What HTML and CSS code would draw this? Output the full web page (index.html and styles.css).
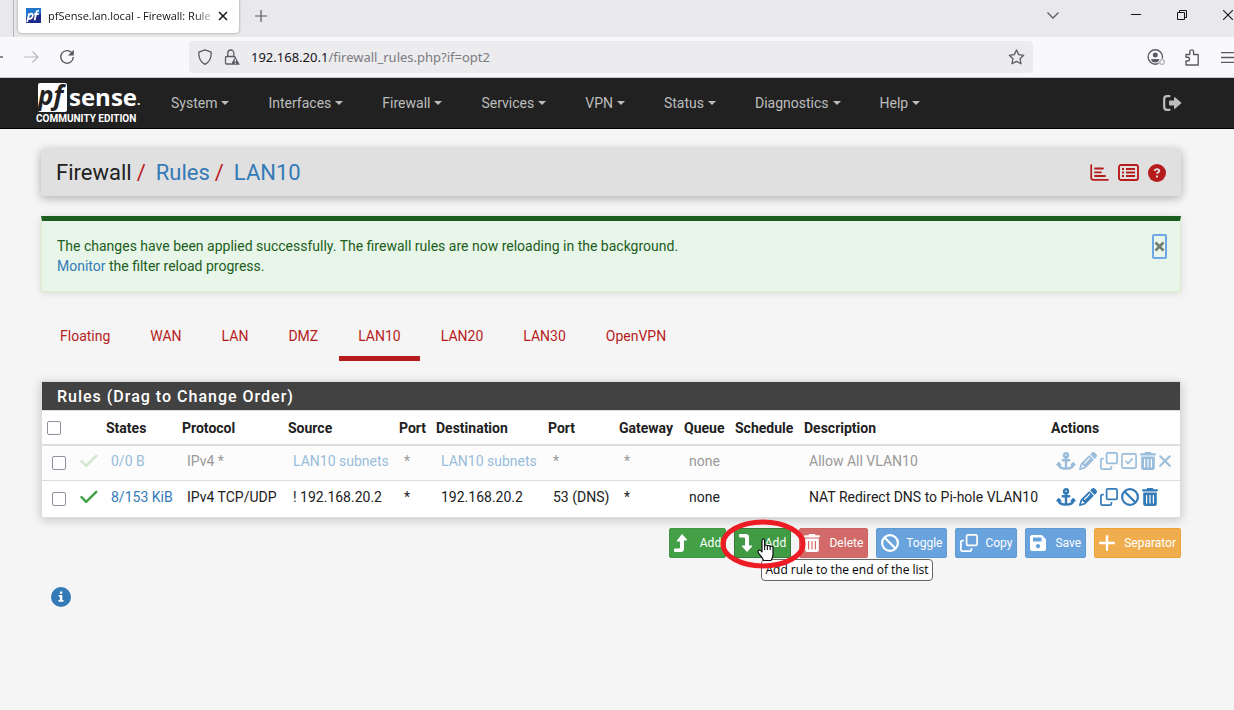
FILE: index.html
```html
<!DOCTYPE html>
<html lang="en">
<head>
<meta charset="utf-8">
<title>pfSense.lan.local - Firewall: Rules: LAN10</title>
<link rel="stylesheet" href="styles.css">
</head>
<body>
<svg class="defs" aria-hidden="true">
  <symbol id="anchor" viewBox="0 0 20 18"><g fill="none" stroke="currentColor" stroke-width="2.4" stroke-linecap="round" stroke-linejoin="round"><circle cx="10" cy="3.2" r="2"/><path d="M10 5.5v11M6.8 8.3h6.4M2.6 11.8c.2 3 3.2 4.8 7.4 4.8s7.200-1.800 7.400-4.800"/><path d="M1.200 12.800l1.600-1.800 1.800 1.800M15.400 12.800l1.800-1.800 1.600 1.800" stroke-width="1.800"/></g></symbol>
  <symbol id="pencil" viewBox="0 0 512 512"><path fill="currentColor" d="M410.300 231l11.300-11.300-33.900-33.900-62.100-62.100L291.700 89.800l-11.300 11.300-22.600 22.600L58.600 322.900c-10.400 10.400-18 23.300-22.200 37.400L1 480.700c-2.500 8.400-.2 17.500 6.100 23.700s15.300 8.500 23.700 6.100l120.300-35.400c14.100-4.200 27-11.800 37.400-22.200L387.700 253.700 410.300 231zM160 399.400l-9.100 22.700c-4 3.100-8.500 5.400-13.300 6.900L59.400 452l23-78.100c1.400-4.900 3.800-9.400 6.900-13.300l22.700-9.100v32c0 8.800 7.200 16 16 16h32zM362.700 18.700L348.300 33.200 325.700 55.800 314.300 67.100l33.900 33.900 62.100 62.100 33.900 33.900 11.300-11.300 22.600-22.600 14.500-14.500c25-25 25-65.500 0-90.500L453.300 18.700c-25-25-65.500-25-90.500 0zm-47.400 168l-144 144c-6.200 6.200-16.400 6.200-22.600 0s-6.200-16.400 0-22.600l144-144c6.200-6.200 16.400-6.200 22.600 0s6.200 16.400 0 22.600z"/></symbol>
  <symbol id="clone" viewBox="0 0 18 18"><g fill="none" stroke="currentColor" stroke-width="1.700" stroke-linejoin="round"><rect x="6.600" y=".9" width="10.500" height="10.500" rx="1.400"/><path d="M3.800 6.600H2.300Q.9 6.600.9 8v7.700q0 1.400 1.400 1.400H10q1.400 0 1.400-1.400v-1.600" /></g></symbol>
  <symbol id="ban" viewBox="0 0 512 512"><path fill="currentColor" d="M367.200 412.500L99.500 144.800C77.100 176.100 64 214.500 64 256c0 106 86 192 192 192c41.500 0 79.900-13.100 111.200-35.500zm45.300-45.300C434.900 335.900 448 297.500 448 256c0-106-86-192-192-192c-41.500 0-79.900 13.100-111.200 35.500L412.500 367.200zM0 256a256 256 0 1 1 512 0A256 256 0 1 1 0 256z"/></symbol>
  <symbol id="trash" viewBox="0 0 16 18"><path fill="currentColor" fill-rule="evenodd" d="M5.200 0h5.600l.8 1.200H15q1 0 1 1.100t-1 1.100H1q-1 0-1-1.100t1-1.100h3.400zM1.200 4.500h13.600V16q0 2-2 2H3.200q-2 0-2-2zM4 7v8.500h1.200V7zm3.400 0v8.500h1.200V7zm3.400 0v8.500H12V7z"/></symbol>
  <symbol id="squarecheck" viewBox="0 0 16 16"><g fill="none" stroke="currentColor" stroke-linejoin="round" stroke-linecap="round"><rect x=".9" y=".9" width="14.200" height="14.200" rx="1.600" stroke-width="1.600"/><path d="M4.800 8.300l2.200 2.200 4.200-4.600" stroke-width="1.600"/></g></symbol>
  <symbol id="times" viewBox="0 0 12 12"><path d="M1.200 1.200l9.600 9.600M10.800 1.200L1.200 10.800" stroke="currentColor" stroke-width="2" stroke-linecap="round"/></symbol>
  <symbol id="check" viewBox="0 0 18 14"><path d="M1.500 7.200l4.600 4.600L16.300 1.800" fill="none" stroke="currentColor" stroke-width="2.400" stroke-linecap="round" stroke-linejoin="round"/></symbol>
  <symbol id="turnup" viewBox="0 0 14 18"><path fill="currentColor" d="M8 0l5 5.600q.6 1-.6 1H10v8.200q0 3.200-3.200 3.200H1q-1 0-1-1v-1.600q0-1 1-1h4.200q.8 0 .8-.8v-6H3.600q-1.200 0-.6-1z"/></symbol>
  <symbol id="turndown" viewBox="0 0 14 18"><path fill="currentColor" d="M8 18l5-5.600q.6-1-.6-1H10V3.200Q10 0 6.800 0H1Q0 0 0 1v1.600q0 1 1 1h4.200q.8 0 .8.800v7H3.600q-1.200 0-.6 1z"/></symbol>
  <symbol id="save" viewBox="0 0 16 16"><path fill="currentColor" fill-rule="evenodd" d="M2.200 0h9.600L16 4.200v9.600q0 2.200-2.200 2.200H2.200Q0 16 0 13.800V2.200Q0 0 2.200 0zM3 2.600v3.800h8.500V2.600zM8 9a2.200 2.200 0 1 0 .01 0z"/></symbol>
  <symbol id="plus" viewBox="0 0 16 16"><path d="M8 1.200v13.600M1.200 8h13.600" stroke="currentColor" stroke-width="2.400" stroke-linecap="round"/></symbol>
</svg>

<header class="browser">
  <div class="tabstrip">
    <div class="tab">
      <svg class="favicon" viewBox="0 0 14 14"><rect width="14" height="14" fill="#1c2a8a"/><path d="M0 0h14v5L0 9z" fill="#2277cc"/><g fill="none" stroke="#fff" stroke-width="1.700"><path d="M1 13l2-8M2.600 6.500q3.400-2.500 3.800.3-.3 3.600-4 3.200M8 11.500l1.600-7.200q.5-2 2.400-1.600M7.600 5.700H12"/></g></svg>
      <span class="tab-title">pfSense.lan.local - Firewall: Rule</span>
      <button class="bare" aria-label="Close tab"><svg width="10" height="10" viewBox="0 0 10 10"><path d="M1 1l8 8M9 1L1 9" stroke="#15141a" stroke-width="1.500"/></svg></button>
    </div>
    <button class="bare new-tab" aria-label="New tab"><svg width="12" height="12" viewBox="0 0 12 12"><path d="M6 0v12M0 6h12" stroke="#5b5b66" stroke-width="1.200"/></svg></button>
    <div class="window-controls">
      <button class="bare" aria-label="List tabs"><svg width="12" height="7" viewBox="0 0 12 7"><path d="M.5.5L6 6 11.500.5" fill="none" stroke="#5b5b66" stroke-width="1.300"/></svg></button>
      <button class="bare" aria-label="Minimize"><svg width="10" height="10" viewBox="0 0 10 10"><path d="M0 4.500h10" stroke="#15141a"/></svg></button>
      <button class="bare" aria-label="Restore"><svg width="10" height="10" viewBox="0 0 10 10"><path d="M.5 2.500h7v7h-7zM2.500 2.500v-2h7v7h-2" fill="none" stroke="#15141a"/></svg></button>
      <button class="bare" aria-label="Close"><svg width="10" height="10" viewBox="0 0 10 10"><path d="M0 0l10 10M10 0L0 10" stroke="#15141a" stroke-width="1.100"/></svg></button>
    </div>
  </div>
  <div class="toolbar">
    <button class="bare back" aria-label="Back"><svg width="3" height="14" viewBox="0 0 3 14"><path d="M0 7h3" stroke="#5b5b66" stroke-width="1.400"/></svg></button>
    <button class="bare" aria-label="Forward"><svg width="15" height="12" viewBox="0 0 15 12"><path d="M0 6h14M8.500.5L14 6l-5.500 5.500" fill="none" stroke="#b8b8bf" stroke-width="1.200"/></svg></button>
    <button class="bare reload" aria-label="Reload"><svg width="16" height="16" viewBox="0 0 16 16"><path d="M12.800 3.800A6.300 6.300 0 1 0 14.300 8" fill="none" stroke="#5b5b66" stroke-width="1.400"/><path d="M14.800.8v5.600H9z" fill="#5b5b66"/></svg></button>
    <div class="address">
      <svg width="16" height="16" viewBox="0 0 16 16"><path d="M8 .8l6.200 2.300c.3 6-1.600 9.900-6.200 12.200C3.400 13 1.500 9.100 1.800 3.100z" fill="none" stroke="#5b5b66" stroke-width="1.300" stroke-linejoin="round"/></svg>
      <svg width="16" height="16" viewBox="0 0 16 16"><g fill="none" stroke="#5b5b66" stroke-width="1.300"><path d="M3.800 7V4a3 3 0 0 1 6 0v3M7 15H2.500Q1.500 15 1.500 14V8.500q0-1 1-1H10q1 0 1 1"/></g><path d="M11.300 7.500l4.500 8.300H6.800z" fill="#5b5b66"/><path d="M11.300 10v3M11.300 13.800v1" stroke="#fff"/></svg>
      <span class="url">192.168.20.1<span class="path">/firewall_rules.php?if=opt2</span></span>
      <svg width="17" height="16" viewBox="0 0 17 16"><path d="M8.500 1l2.200 4.600 5 .7-3.600 3.500.9 5-4.500-2.400L4 14.800l.9-5L1.300 6.300l5-.7z" fill="none" stroke="#5b5b66" stroke-width="1.300" stroke-linejoin="round"/></svg>
    </div>
    <div class="tools">
      <button class="bare" aria-label="Account"><svg width="19" height="17" viewBox="0 0 19 17"><circle cx="8.300" cy="8" r="7.200" fill="none" stroke="#5b5b66" stroke-width="1.400"/><circle cx="8.300" cy="6" r="2.500" fill="#5b5b66"/><path d="M4 10h8.600q-.6 3.600-4.300 3.600T4 10z" fill="#5b5b66"/><circle cx="15" cy="13" r="3.600" fill="#f9f9fb"/><circle cx="15" cy="13" r="2.300" fill="none" stroke="#b0b0b8" stroke-width="1.300"/></svg></button>
      <button class="bare" aria-label="Extensions"><svg width="14" height="17" viewBox="0 0 14 17"><path d="M1 16V12h1.600a1.900 1.900 0 0 0 0-3.800H1V5.500h3.800V2.800a1.900 1.900 0 0 1 3.800 0v2.700h4.600V16z" fill="none" stroke="#5b5b66" stroke-width="1.400" stroke-linejoin="round"/></svg></button>
      <button class="bare hamburger" aria-label="Menu"><svg width="13" height="11" viewBox="0 0 13 11"><path d="M0 .7h13M0 5.500h13M0 10.300h13" stroke="#5b5b66" stroke-width="1.300"/></svg></button>
    </div>
  </div>
</header>

<nav class="navbar">
  <a class="logo" href="#"><span class="logo-top"><span class="logo-pf">pf</span><span class="logo-sense">sense</span><span class="logo-dot">.</span></span><span class="logo-sub">COMMUNITY EDITION</span></a>
  <div class="menu">
    <a href="#">System</a><a href="#">Interfaces</a><a href="#">Firewall</a><a href="#">Services</a><a href="#">VPN</a><a href="#">Status</a><a href="#">Diagnostics</a><a href="#">Help</a>
  </div>
  <a class="logout" href="#" aria-label="Logout"><svg width="19" height="16" viewBox="0 0 19 16"><path d="M6.500 1.200H4Q1.200 1.200 1.200 4v8q0 2.800 2.800 2.800h2.500" fill="none" stroke="currentColor" stroke-width="2.200" stroke-linecap="round"/><path d="M12 2.200L18.600 8 12 13.800q-1 .4-1-.8V10.500H7q-1 0-1-1v-3q0-1 1-1h4V3q0-1.200 1-.8z" fill="currentColor"/></svg></a>
</nav>

<main>
  <div class="crumbs">
    <h1>Firewall<span class="slash">/</span><a href="#">Rules</a><span class="slash">/</span><a href="#">LAN10</a></h1>
    <div class="crumb-icons">
      <a href="#" aria-label="Status"><svg width="19" height="17" viewBox="0 0 19 17"><path d="M1.200 1v12.800q0 2 2 2H18" fill="none" stroke="currentColor" stroke-width="1.700" stroke-linecap="round"/><path d="M5 4.500h8M5 8.300h6M5 12h10" stroke="currentColor" stroke-width="1.800" stroke-linecap="round"/></svg></a>
      <a href="#" aria-label="Log"><svg width="21" height="17" viewBox="0 0 21 17"><rect x="1" y="1" width="19" height="15" rx="2" fill="none" stroke="currentColor" stroke-width="1.900"/><path d="M4 5h2M4 8.500h2M4 12h2M8 5h9M8 8.500h9M8 12h9" stroke="currentColor" stroke-width="2"/></svg></a>
      <a href="#" aria-label="Help"><svg width="18" height="18" viewBox="0 0 18 18"><circle cx="9" cy="9" r="9" fill="currentColor"/><path d="M6.700 6.800q.2-1.700 2.300-1.700t2.300 1.700q0 1.100-1.200 1.600-1.100.5-1.100 1.400M9 11.600v1.900" fill="none" stroke="#e0e0e0" stroke-width="1.900"/></svg></a>
    </div>
  </div>

  <div class="alert" role="alert">
    <p>The changes have been applied successfully. The firewall rules are now reloading in the background.<br><a href="#">Monitor</a> the filter reload progress.</p>
    <button class="alert-close" aria-label="Close"><svg width="11" height="11" viewBox="0 0 11 11"><path d="M1.500 1.500l8 8M9.500 1.500l-8 8" stroke="#6f7d70" stroke-width="2.600"/></svg></button>
  </div>

  <nav class="tabs">
    <a href="#">Floating</a><a href="#">WAN</a><a href="#">LAN</a><a href="#">DMZ</a><a class="active" href="#">LAN10</a><a href="#">LAN20</a><a href="#">LAN30</a><a href="#">OpenVPN</a>
  </nav>

  <section class="panel">
    <h2>Rules (Drag to Change Order)</h2>
    <table>
      <colgroup><col class="c-box"><col class="c-mark"><col class="c-states"><col class="c-proto"><col class="c-src"><col class="c-port"><col class="c-dest"><col class="c-dport"><col class="c-gw"><col class="c-queue"><col class="c-sched"><col><col class="c-act"></colgroup>
      <thead><tr><th><input type="checkbox" aria-label="Select all"></th><th></th><th>States</th><th>Protocol</th><th>Source</th><th>Port</th><th>Destination</th><th>Port</th><th>Gateway</th><th>Queue</th><th>Schedule</th><th>Description</th><th>Actions</th></tr></thead>
      <tbody>
        <tr class="disabled"><td><input type="checkbox" aria-label="Select Allow All VLAN10"></td><td class="mark"><svg width="18" height="14"><use href="#check"/></svg></td><td><a href="#">0/0 B</a></td><td>IPv4 *</td><td><a href="#">LAN10 subnets</a></td><td>*</td><td><a href="#">LAN10 subnets</a></td><td>*</td><td>*</td><td>none</td><td></td><td>Allow All VLAN10</td>
          <td><div class="actions"><a href="#" aria-label="Anchor"><svg width="20" height="18"><use href="#anchor"/></svg></a><a href="#" aria-label="Edit"><svg width="18" height="18"><use href="#pencil"/></svg></a><a href="#" aria-label="Copy"><svg width="18" height="18"><use href="#clone"/></svg></a><a href="#" aria-label="Enable"><svg width="16" height="16"><use href="#squarecheck"/></svg></a><a href="#" aria-label="Delete"><svg width="16" height="18"><use href="#trash"/></svg></a><a href="#" aria-label="Kill states"><svg width="12" height="12"><use href="#times"/></svg></a></div></td></tr>
        <tr><td><input type="checkbox" aria-label="Select NAT Redirect"></td><td class="mark"><svg width="18" height="14"><use href="#check"/></svg></td><td><a href="#">8/153 KiB</a></td><td>IPv4 TCP/UDP</td><td>! 192.168.20.2</td><td>*</td><td>192.168.20.2</td><td>53 (DNS)</td><td>*</td><td>none</td><td></td><td>NAT Redirect DNS to Pi-hole VLAN10</td>
          <td><div class="actions"><a href="#" aria-label="Anchor"><svg width="20" height="18"><use href="#anchor"/></svg></a><a href="#" aria-label="Edit"><svg width="18" height="18"><use href="#pencil"/></svg></a><a href="#" aria-label="Copy"><svg width="18" height="18"><use href="#clone"/></svg></a><a href="#" aria-label="Disable"><svg width="18" height="18"><use href="#ban"/></svg></a><a href="#" aria-label="Delete"><svg width="16" height="18"><use href="#trash"/></svg></a></div></td></tr>
      </tbody>
    </table>
  </section>

  <div class="buttons">
    <button class="btn green"><svg width="14" height="18"><use href="#turnup"/></svg><span>Add</span></button>
    <div class="hovered">
      <button class="btn green pressed"><svg width="14" height="18"><use href="#turndown"/></svg><span>Add</span></button>
      <span class="tooltip" role="tooltip">Add rule to the end of the list</span>
      <svg class="ring" width="86" height="50" viewBox="0 0 86 50"><ellipse cx="43" cy="25" rx="40" ry="22" fill="none" stroke="#ed1c24" stroke-width="5"/></svg>
      <svg class="pointer" width="17" height="24" viewBox="0 0 17 24"><path d="M5 13V2.500Q5 1 6.300 1t1.300 1.500V8q.3-1 1.400-1t1.400 1.300q.3-.8 1.400-.8t1.400 1.300q.3-.6 1.300-.6 1.500 0 1.500 1.600V16q0 4-2 6.500H6.500Q5.500 19.500 3 17q-2-2.500-2-3.600Q1.500 11.800 3 12.200q1 .3 2 1.800z" fill="#fff" stroke="#111" stroke-width="1.200" stroke-linejoin="round"/><path d="M7.600 8v4M10.400 8.500V12M13.200 9v3" stroke="#111" stroke-width="1.100"/></svg>
    </div>
    <button class="btn red"><svg width="16" height="18"><use href="#trash"/></svg><span>Delete</span></button>
    <button class="btn blue"><svg width="18" height="18"><use href="#ban"/></svg><span>Toggle</span></button>
    <button class="btn blue"><svg width="18" height="18"><use href="#clone"/></svg><span>Copy</span></button>
    <button class="btn blue"><svg width="16" height="16"><use href="#save"/></svg><span>Save</span></button>
    <button class="btn orange"><svg width="16" height="16"><use href="#plus"/></svg><span>Separator</span></button>
  </div>

  <a class="info" href="#" aria-label="Information"><svg width="20" height="20" viewBox="0 0 20 20"><circle cx="10" cy="10" r="10" fill="currentColor"/><path d="M8.900 4.500h2.400v2.200H8.900zM7.700 8h3.600v5h1.200v1.800H7.500V13h1.400V9.700H7.700z" fill="#fff"/></svg></a>
</main>
</body>
</html>
```
FILE: styles.css
```css
* { box-sizing: border-box; }
body { margin: 0; background: #f5f5f5; color: #212121; font: 14px/20px Roboto, "Liberation Sans", sans-serif; overflow-x: hidden; }
a { color: #337ab7; text-decoration: none; }
svg { display: block; flex: none; }
.defs { position: absolute; width: 0; height: 0; }
.bare { border: 0; background: none; padding: 0; display: flex; }

/* Browser chrome */
.browser { font-family: "Open Sans", "Noto Sans", sans-serif; overflow: hidden; }
.tabstrip { display: flex; align-items: flex-start; height: 37px; background: #e9e9eb; padding-left: 13px; }
.tabstrip::before { content: ""; width: 1px; height: 37px; background: #b5b5ba; }
.tab { display: flex; align-items: center; width: 221px; height: 33px; margin-left: 4px; padding: 0 11px 2px 8px; background: #fff; border-radius: 0 0 4px 4px; box-shadow: 0 0 3px rgba(0, 0, 0, .4); }
.favicon { width: 15px; height: 15px; }
.tab-title { flex: 1; min-width: 0; margin: 0 0 0 7px; font-size: 11px; color: #15141a; white-space: nowrap; -webkit-mask-image: linear-gradient(to left, transparent, #000 24px); mask-image: linear-gradient(to left, transparent, #000 24px); }
.new-tab { margin: 10px 0 0 16px; }
.window-controls { display: flex; align-items: center; gap: 36px; height: 30px; margin-left: auto; margin-right: 1px; }
.window-controls .bare:first-child { margin-right: 36px; }
.toolbar { display: flex; align-items: center; height: 41px; background: #f9f9fb; border-bottom: 1px solid #c8c8cc; }
.back { margin-right: 21px; }
.reload { margin-left: 20px; }
.address { display: flex; align-items: center; gap: 11px; flex: 1; height: 32px; margin-left: 114px; padding: 0 8px; background: #ececee; border-radius: 4px; }
.url { flex: 1; font-family: "Noto Sans", "Open Sans", sans-serif; font-size: 13px; color: #15141a; }
.path { color: #7b7b82; }
.tools { display: flex; align-items: center; gap: 19px; width: 201px; padding-left: 114px; }
.hamburger { margin-left: 3px; }

/* Top navigation */
.navbar { display: flex; align-items: center; height: 51px; padding: 0 52px 1px 36px; background: #212121; border-bottom: 1px solid #000; }
.logo { display: flex; flex-direction: column; width: 106px; padding-top: 3px; color: #fff; }
.logo-top { display: flex; align-items: flex-start; height: 30px; padding-left: 2px; font: bold 24px/24px "Open Sans", "Noto Sans", sans-serif; }
.logo-pf { width: 29px; height: 29px; background: #fff; color: #212121; border-radius: 2px; font-style: italic; font-size: 26px; }
.logo-sense { margin-left: 2px; line-height: 28px; }
.logo-dot { font-size: 12px; line-height: 36px; }
.logo-sub { font-size: 10px; font-weight: 700; line-height: 12px; white-space: nowrap; }
.menu { display: flex; gap: 39px; margin-left: 29px; }
.menu a { display: flex; align-items: center; gap: 5px; color: #bdbdbd; }
.menu a::after { content: ""; border: 4px solid transparent; border-top-color: currentColor; border-bottom: 0; }
.menu a:nth-child(n) { gap: 4px; }
.logout { margin-left: auto; color: #bdbdbd; }

main { padding: 20px 53px 0 41px; }
.crumbs { display: flex; justify-content: space-between; align-items: center; padding: 0 15px; height: 47px; background: #e0e0e0; border-radius: 3px; box-shadow: 0 2px 10px rgba(0, 0, 0, .3); }
.crumbs h1 { margin: 0; font-size: 22px; font-weight: 400; line-height: 26px; }
.slash { margin: 0 10px 0 5px; color: #b71c1c; }
.crumb-icons { display: flex; align-items: center; gap: 9px; }
.crumb-icons a { color: #b71c1c; }
.alert { display: flex; justify-content: space-between; align-items: flex-start; margin-top: 20px; padding: 13px 13px 15px 15px; background: #e8f5e9; border: 1px solid #dcedc8; border-top: 5px solid #1b5e20; color: #1b5e20; box-shadow: 0 1px 8px rgba(0, 0, 0, .12); }
.alert p { margin: 2px 0 0; }
.alert-close { display: flex; align-items: center; justify-content: center; width: 15px; height: 25px; padding: 0; background: none; border: 2px solid #6ea6e6; border-radius: 2px; }
.tabs { display: flex; gap: 2px; margin: 34px 0 20px; }
.tabs a { padding: 0 19px 10px; border-bottom: 5px solid transparent; color: #b71c1c; }
.tabs .active { border-color: #b71c1c; }

/* Rule table */
.panel { background: #fff; border: 1px solid #ddd; box-shadow: 0 2px 10px rgba(0, 0, 0, .2); }
.panel h2 { margin: 0; padding: 5px 15px 3px; background: #424242; color: #fff; font-size: 16px; font-weight: 500; line-height: 20px; letter-spacing: 1px; }
table { width: 100%; table-layout: fixed; border-collapse: collapse; white-space: nowrap; }
th { height: 34px; padding: 2px 5px 0; border-top: 1px solid #ddd; border-bottom: 2px solid #ddd; text-align: left; }
td { height: 36px; padding: 0 0 3px 10px; border-top: 1px solid #ddd; }
input[type="checkbox"] { display: block; width: 14px; height: 14px; margin: 0; appearance: none; background: #fff; border: 1px solid #8f8f9d; border-radius: 2px; }
td input[type="checkbox"] { margin-top: 4px; }
.c-box { width: 32px; }
.c-mark { width: 27px; }
.c-states { width: 76px; }
.c-proto { width: 106px; }
.c-src { width: 111px; }
.c-port { width: 37px; }
.c-dest { width: 112px; }
.c-dport { width: 71px; }
.c-gw { width: 65px; }
.c-queue { width: 51px; }
.c-sched { width: 69px; }
.c-act { width: 134px; }
td.mark { padding-left: 6px; color: #43a047; }
.actions { display: flex; align-items: center; gap: 3px; }
.disabled { background: #fcfcfc; }
.disabled td { color: #999; }
.disabled a { color: #99bddb; }
.disabled td.mark { color: #cfe6d0; }

/* Buttons */
.buttons { display: flex; justify-content: flex-end; gap: 8px; margin-top: 10px; }
.btn { display: grid; grid-template-columns: 25px auto; align-items: center; min-width: 57px; height: 30px; padding: 0 4px; border: 1px solid; border-radius: 2px; color: #fff; font: 12px/18px Roboto, "Liberation Sans", sans-serif; }
.green { background: #43a047; border-color: #3f9643; }
.pressed { background: #409b44; border-color: #357a38; }
.red { background: #d16a68; border-color: #cb6361; }
.blue { background: #69a3de; border-color: #5f9ad3; }
.orange { background: #f0ad4e; border-color: #eea236; }
.hovered { position: relative; }
.ring { position: absolute; left: -14px; top: -9px; z-index: 2; }
.pointer { position: absolute; left: 23px; top: 10px; z-index: 3; }
.tooltip { position: absolute; left: 27px; top: 31px; z-index: 1; padding: 0 3px; background: #fff; border: 1px solid #666; border-radius: 4px; color: #000; font: 12px/20px "Open Sans", "Noto Sans", sans-serif; white-space: nowrap; }
.info { display: inline-block; margin: 29px 0 0 10px; }
```
